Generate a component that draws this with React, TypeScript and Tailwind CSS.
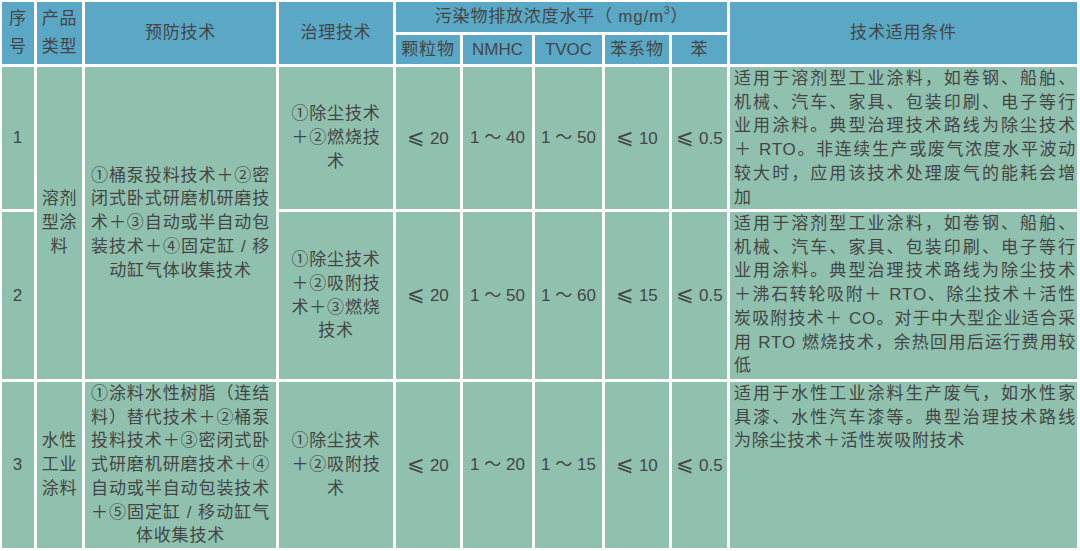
import React from 'react';

const FONT = '"Liberation Sans", "Noto Sans CJK SC", sans-serif';

type Row = {
  no: string;
  control: string[];
  values: string[];
  cond: string[];
};

const rows: Row[] = [
  {
    no: '1',
    control: ['①除尘技术', '＋②燃烧技', '术'],
    values: ['⩽ 20', '1 ～ 40', '1 ～ 50', '⩽ 10', '⩽ 0.5'],
    cond: [
      '适用于溶剂型工业涂料，如卷钢、船舶、',
      '机械、汽车、家具、包装印刷、电子等行',
      '业用涂料。典型治理技术路线为除尘技术',
      '＋ RTO。非连续生产或废气浓度水平波动',
      '较大时，应用该技术处理废气的能耗会增',
      '加',
    ],
  },
  {
    no: '2',
    control: ['①除尘技术', '＋②吸附技', '术＋③燃烧', '技术'],
    values: ['⩽ 20', '1 ～ 50', '1 ～ 60', '⩽ 15', '⩽ 0.5'],
    cond: [
      '适用于溶剂型工业涂料，如卷钢、船舶、',
      '机械、汽车、家具、包装印刷、电子等行',
      '业用涂料。典型治理技术路线为除尘技术',
      '＋沸石转轮吸附＋ RTO、除尘技术＋活性',
      '炭吸附技术＋ CO。对于中大型企业适合采',
      '用 RTO 燃烧技术，余热回用后运行费用较',
      '低',
    ],
  },
  {
    no: '3',
    control: ['①除尘技术', '＋②吸附技', '术'],
    values: ['⩽ 20', '1 ～ 20', '1 ～ 15', '⩽ 10', '⩽ 0.5'],
    cond: [
      '适用于水性工业涂料生产废气，如水性家',
      '具漆、水性汽车漆等。典型治理技术路线',
      '为除尘技术＋活性炭吸附技术',
    ],
  },
];

const prevent12 = [
  '①桶泵投料技术＋②密',
  '闭式卧式研磨机研磨技',
  '术＋③自动或半自动包',
  '装技术＋④固定缸 / 移',
  '动缸气体收集技术',
];

const prevent3 = [
  '①涂料水性树脂（连结',
  '料）替代技术＋②桶泵',
  '投料技术＋③密闭式卧',
  '式研磨机研磨技术＋④',
  '自动或半自动包装技术',
  '＋⑤固定缸 / 移动缸气',
  '体收集技术',
];

function Head({ children, className = '' }: { children: React.ReactNode; className?: string }) {
  return (
    <div className={`bg-[#5aa8c5] flex items-center justify-center text-center ${className}`}>
      {children}
    </div>
  );
}

function Body({ children, className = '' }: { children: React.ReactNode; className?: string }) {
  return <div className={`bg-[#8fc1ae] flex ${className}`}>{children}</div>;
}

// full lines justified, the last one centred
function Block({ lines }: { lines: string[] }) {
  return (
    <div className="w-full px-[6px]">
      {lines.map((l, i) => (
        <div
          key={i}
          className={i < lines.length - 1 ? '[text-align-last:justify] text-justify' : 'text-center'}
        >
          {l}
        </div>
      ))}
    </div>
  );
}

function Cond({ lines }: { lines: string[] }) {
  return (
    <div className="w-full pl-[4px] pr-[1px]">
      {lines.map((l, i) => (
        <div key={i} className={i < lines.length - 1 ? '[text-align-last:justify] text-justify' : 'text-left'}>
          {l}
        </div>
      ))}
    </div>
  );
}

function Value({ v }: { v: string }) {
  if (v.startsWith('⩽')) {
    return (
      <span>
        <span className="text-[21px] leading-none">⩽</span>
        {v.slice(1)}
      </span>
    );
  }
  return <span>{v}</span>;
}

export default function App() {
  return (
    <div
      className="w-[1080px] h-[551px] bg-white pt-[2px] pl-[2px] pr-[3px] pb-[3px] text-[#454545] text-[17px] leading-[23.7px] tracking-[0.8px]"
      style={{ fontFamily: FONT }}
    >
      <div className="grid grid-cols-[32px_45px_191px_114px_64px_69px_67px_64px_55px_1fr] grid-rows-[30px_29px_142px_167px_166px] gap-[3px] h-full">
        {/* header */}
        <Head className="row-span-2 leading-[28px]">序<br />号</Head>
        <Head className="row-span-2 leading-[28px]">产品<br />类型</Head>
        <Head className="row-span-2">预防技术</Head>
        <Head className="row-span-2">治理技术</Head>
        <Head className="col-span-5">
          污染物排放浓度水平（ mg/m<sup className="text-[10px] -top-[0.6em]">3</sup>）
        </Head>
        <Head className="row-span-2">技术适用条件</Head>
        <Head>颗粒物</Head>
        <Head className="tracking-normal">NMHC</Head>
        <Head className="tracking-normal">TVOC</Head>
        <Head>苯系物</Head>
        <Head>苯</Head>

        {rows.map((r, idx) => (
          <React.Fragment key={r.no}>
            <Body className="items-center justify-center">{r.no}</Body>
            {idx === 0 && (
              <Body className="row-span-2 items-center justify-center text-center">
                <div>溶剂<br />型涂<br />料</div>
              </Body>
            )}
            {idx === 0 && (
              <Body className="row-span-2 items-center">
                <Block lines={prevent12} />
              </Body>
            )}
            {idx === 2 && (
              <Body className="items-center justify-center text-center">
                <div>水性<br />工业<br />涂料</div>
              </Body>
            )}
            {idx === 2 && (
              <Body className="items-center">
                <Block lines={prevent3} />
              </Body>
            )}
            <Body className="items-center justify-center text-center">
              <div>
                {r.control.map((c, i) => (
                  <div key={i}>{c}</div>
                ))}
              </div>
            </Body>
            {r.values.map((v, i) => (
              <Body key={i} className="items-center justify-center whitespace-nowrap tracking-normal">
                <Value v={v} />
              </Body>
            ))}
            <Body className="items-start">
              <Cond lines={r.cond} />
            </Body>
          </React.Fragment>
        ))}
      </div>
    </div>
  );
}
